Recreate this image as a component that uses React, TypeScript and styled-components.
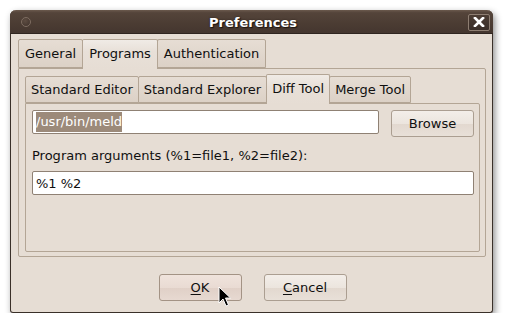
import styled, { createGlobalStyle } from "styled-components";

const GlobalStyle = createGlobalStyle`
    html, body {
        margin: 0;
        padding: 0;
        background: #ffffff;
        font-family: "DejaVu Sans", "Liberation Sans", sans-serif;
        font-size: 13px;
        color: #101010;
    }
`;

const outerTabs = ["General", "Programs", "Authentication"];
const innerTabs = ["Standard Editor", "Standard Explorer", "Diff Tool", "Merge Tool"];

function App() {
    return (
        <>
            <GlobalStyle />
            <Window>
                <TitleBar>
                    <MenuDot />
                    <Title>Preferences</Title>
                    <CloseButton>
                        <svg width="12" height="10" viewBox="0 0 12 10">
                            <path
                                d="M2 1 L10 9 M10 1 L2 9"
                                stroke="#ffffff"
                                strokeWidth="2.6"
                                strokeLinecap="square"
                            />
                        </svg>
                    </CloseButton>
                </TitleBar>
                <Body>
                    <Notebook>
                        <TabStrip>
                            {outerTabs.map((t) => (
                                <Tab key={t} active={t === "Programs"}>
                                    {t}
                                </Tab>
                            ))}
                        </TabStrip>
                        <OuterPanel>
                            <Notebook>
                                <TabStrip>
                                    {innerTabs.map((t) => (
                                        <Tab key={t} small active={t === "Diff Tool"}>
                                            {t}
                                        </Tab>
                                    ))}
                                </TabStrip>
                                <InnerPanel>
                                    <PathRow>
                                        <Entry>
                                            <Selected>/usr/bin/meld</Selected>
                                        </Entry>
                                        <Button>Browse</Button>
                                    </PathRow>
                                    <Label>Program arguments (%1=file1, %2=file2):</Label>
                                    <Entry>%1 %2</Entry>
                                </InnerPanel>
                            </Notebook>
                        </OuterPanel>
                    </Notebook>
                    <ButtonRow>
                        <Button hover>
                            <u>O</u>K
                        </Button>
                        <Button>
                            <u>C</u>ancel
                        </Button>
                    </ButtonRow>
                </Body>
                <Cursor width="14" height="22" viewBox="0 0 14 22">
                    <path
                        d="M1 1 L1 17 L5 13 L8 20 L10.5 19 L7.5 12 L12.5 12 Z"
                        fill="#000000"
                        stroke="#ffffff"
                        strokeWidth="1"
                        strokeLinejoin="round"
                    />
                </Cursor>
            </Window>
        </>
    );
}

const Window = styled.div`
    position: relative;
    margin: 10px 0 0 10px;
    width: 483px;
    height: 303px;
    box-sizing: border-box;
    display: flex;
    flex-direction: column;
    background: #e6ddd4;
    border: 1px solid #3a3029;
    border-top: none;
    border-radius: 6px 6px 3px 3px;
    box-shadow: 2px 3px 7px rgba(0, 0, 0, 0.45);
`;

const TitleBar = styled.div`
    height: 24px;
    margin: 0 -1px;
    display: grid;
    grid-template-columns: 1fr auto 1fr;
    align-items: center;
    padding: 0 3px 0 11px;
    border-radius: 6px 6px 0 0;
    background: linear-gradient(#6b594d 0%, #54443a 12%, #4b3c33 60%, #44362f 100%);
    border-bottom: 1px solid #2f2520;
    box-sizing: border-box;
`;

const MenuDot = styled.div`
    width: 8px;
    height: 8px;
    border-radius: 50%;
    border: 1px solid #7e6d61;
    background: radial-gradient(circle at 40% 35%, #5e4d42, #3e312a);
    margin-top: 1px;
`;

const Title = styled.div`
    font-weight: bold;
    font-size: 13px;
    color: #ffffff;
    text-shadow: 1px 1px 1px #1c140f, 0 0 2px #2a1f18;
    padding: 1px 5px 0 0;
`;

const CloseButton = styled.div`
    justify-self: end;
    width: 20px;
    height: 15px;
    display: flex;
    align-items: center;
    justify-content: center;
    border: 1px solid #8e7e72;
    border-radius: 2px;
    background: linear-gradient(#4c3d34, #3a2e28);
    margin-top: 1px;
`;

const Body = styled.div`
    flex: 1;
    display: flex;
    flex-direction: column;
    padding: 5px 6px 11px 7px;
`;

const Notebook = styled.div`
    flex: 1;
    display: flex;
    flex-direction: column;
`;

const TabStrip = styled.div`
    display: flex;
    align-items: flex-end;
    position: relative;
    z-index: 1;
`;

const Tab = styled.div<{ active?: boolean; small?: boolean }>`
    box-sizing: border-box;
    height: ${(p) => (p.active ? 30 : p.small ? 27 : 29)}px;
    margin-bottom: ${(p) => (p.active ? -1 : 0)}px;
    padding: 0 ${(p) => (p.small ? 5 : 6)}px ${(p) => (p.active ? 3 : 0)}px;
    display: flex;
    align-items: center;
    border: 1px solid #b3a595;
    border-bottom: ${(p) => (p.active ? "none" : "1px solid #b3a595")};
    border-radius: 2px 2px 0 0;
    margin-left: -1px;
    &:first-child {
        margin-left: 0;
    }
    background: ${(p) =>
        p.active
            ? "linear-gradient(#f0ebe6, #e8e0d8 40%, #e6ddd4)"
            : "linear-gradient(#e6ddd4, #dcd1c6)"};
    color: #101010;
    white-space: nowrap;
    z-index: ${(p) => (p.active ? 2 : 0)};
`;

const OuterPanel = styled.div`
    flex: 1;
    display: flex;
    flex-direction: column;
    border: 1px solid #b3a595;
    border-radius: 0 2px 2px 2px;
    padding: 5px 5px 4px 6px;
`;

const InnerPanel = styled.div`
    flex: 1;
    display: flex;
    flex-direction: column;
    border: 1px solid #b3a595;
    border-radius: 0 2px 2px 2px;
    padding: 6px 5px 0 6px;
`;

const PathRow = styled.div`
    display: grid;
    grid-template-columns: 1fr 83px;
    align-items: start;
    column-gap: 12px;
    height: 27px;
`;

const Entry = styled.div`
    box-sizing: border-box;
    height: 24px;
    display: flex;
    align-items: center;
    padding: 0 3px;
    background: #ffffff;
    border: 1px solid #8f8174;
    border-radius: 2px;
    white-space: nowrap;
`;

const Selected = styled.span`
    background: #9c8a7a;
    color: #ffffff;
    line-height: 20px;
`;

const Label = styled.div`
    margin: 11px 0 7px 0;
    line-height: 16px;
`;

const Button = styled.div<{ hover?: boolean }>`
    box-sizing: border-box;
    width: 83px;
    height: 27px;
    display: flex;
    align-items: center;
    justify-content: center;
    border: 1px solid ${(p) => (p.hover ? "#a39385" : "#ab9e91")};
    border-radius: 3px;
    background: ${(p) =>
        p.hover
            ? "linear-gradient(#efe3dc, #e9dbd3 50%, #e0d0c7 52%, #e7d9d1)"
            : "linear-gradient(#f3eee9, #ece5de 50%, #e2d8cf 52%, #e8e0d8)"};
    color: #101010;
    u {
        text-decoration-thickness: 1px;
        text-underline-offset: 2px;
    }
`;

const ButtonRow = styled.div`
    display: flex;
    justify-content: center;
    gap: 22px;
    margin-top: 17px;
    padding-left: 1px;
`;

const Cursor = styled.svg`
    position: absolute;
    left: 207px;
    top: 276px;
`;

export default App;
